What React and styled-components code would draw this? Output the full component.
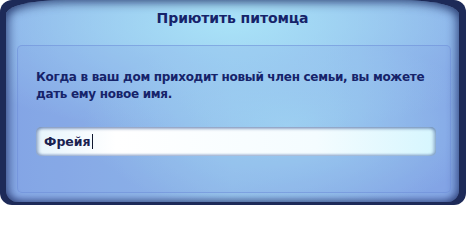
import styled, { createGlobalStyle } from 'styled-components';

const Global = createGlobalStyle`
  html, body {
    margin: 0;
    padding: 0;
    background: #ffffff;
  }
  * { box-sizing: border-box; }
`;

const Frame = styled.div`
  width: 466px;
  height: 205px;
  background: #1d2a58;
  border-radius: 12px;
  padding: 0 7px 3px 6px;
  display: flex;
  font-family: "DejaVu Sans", Verdana, sans-serif;
`;

const Panel = styled.div`
  flex: 1;
  display: flex;
  flex-direction: column;
  border-radius: 60px 60px 12px 12px / 14px 14px 12px 12px;
  background:
    radial-gradient(ellipse 70% 55% at 50% 12%, rgba(170, 228, 248, 0.95), rgba(170, 228, 248, 0) 100%),
    radial-gradient(ellipse 45% 45% at 62% 62%, rgba(168, 226, 246, 0.85), rgba(168, 226, 246, 0) 100%),
    linear-gradient(90deg, #86a8e6 0%, #93bdea 50%, #84a6e6 100%);
  box-shadow:
    inset 8px 0 8px -4px rgba(30, 45, 100, 0.55),
    inset -8px 0 8px -4px rgba(30, 45, 100, 0.55),
    inset 0 10px 8px -6px rgba(40, 60, 110, 0.6),
    inset 0 -6px 6px -3px rgba(30, 45, 100, 0.45);
`;

const TitleBar = styled.div`
  height: 45px;
  display: flex;
  justify-content: center;
  padding-top: 8px;
`;

const Title = styled.h1`
  margin: 0;
  font-size: 14px;
  line-height: 20px;
  font-weight: bold;
  letter-spacing: -0.1px;
  color: #16236a;
`;

const Inner = styled.div`
  flex: 1;
  margin: 0 8px 9px 11px;
  border: 1px solid rgba(110, 140, 215, 0.55);
  border-radius: 5px;
  background: rgba(120, 150, 225, 0.18);
  padding: 23px 0 0 18px;
  display: flex;
  flex-direction: column;
`;

const Message = styled.p`
  margin: 0;
  font-size: 12px;
  line-height: 17px;
  font-weight: bold;
  letter-spacing: -0.3px;
  color: #16236a;
`;

const Field = styled.div`
  margin-top: 24px;
  width: 400px;
  height: 29px;
  border-radius: 5px;
  background: linear-gradient(90deg, #e6f4fc 0%, #ffffff 20%, #f4fcff 70%, #d6f6fe 100%);
  box-shadow:
    inset 0 2px 3px rgba(60, 90, 150, 0.45),
    inset 3px 0 3px rgba(60, 90, 150, 0.3),
    inset -3px 0 3px rgba(60, 90, 150, 0.3),
    inset 0 -2px 2px rgba(120, 150, 200, 0.35);
  display: flex;
  align-items: center;
  padding-left: 8px;
`;

const Value = styled.span`
  font-size: 12.5px;
  font-weight: bold;
  color: #1a2150;
`;

const Caret = styled.span`
  display: inline-block;
  width: 1px;
  height: 15px;
  background: #101830;
  margin-left: 1px;
`;

export default function App() {
  return (
    <>
      <Global />
      <Frame>
        <Panel>
          <TitleBar>
            <Title>Приютить питомца</Title>
          </TitleBar>
          <Inner>
            <Message>
              Когда в ваш дом приходит новый член семьи, вы можете
              <br />
              дать ему новое имя.
            </Message>
            <Field>
              <Value>Фрейя</Value>
              <Caret />
            </Field>
          </Inner>
        </Panel>
      </Frame>
    </>
  );
}
